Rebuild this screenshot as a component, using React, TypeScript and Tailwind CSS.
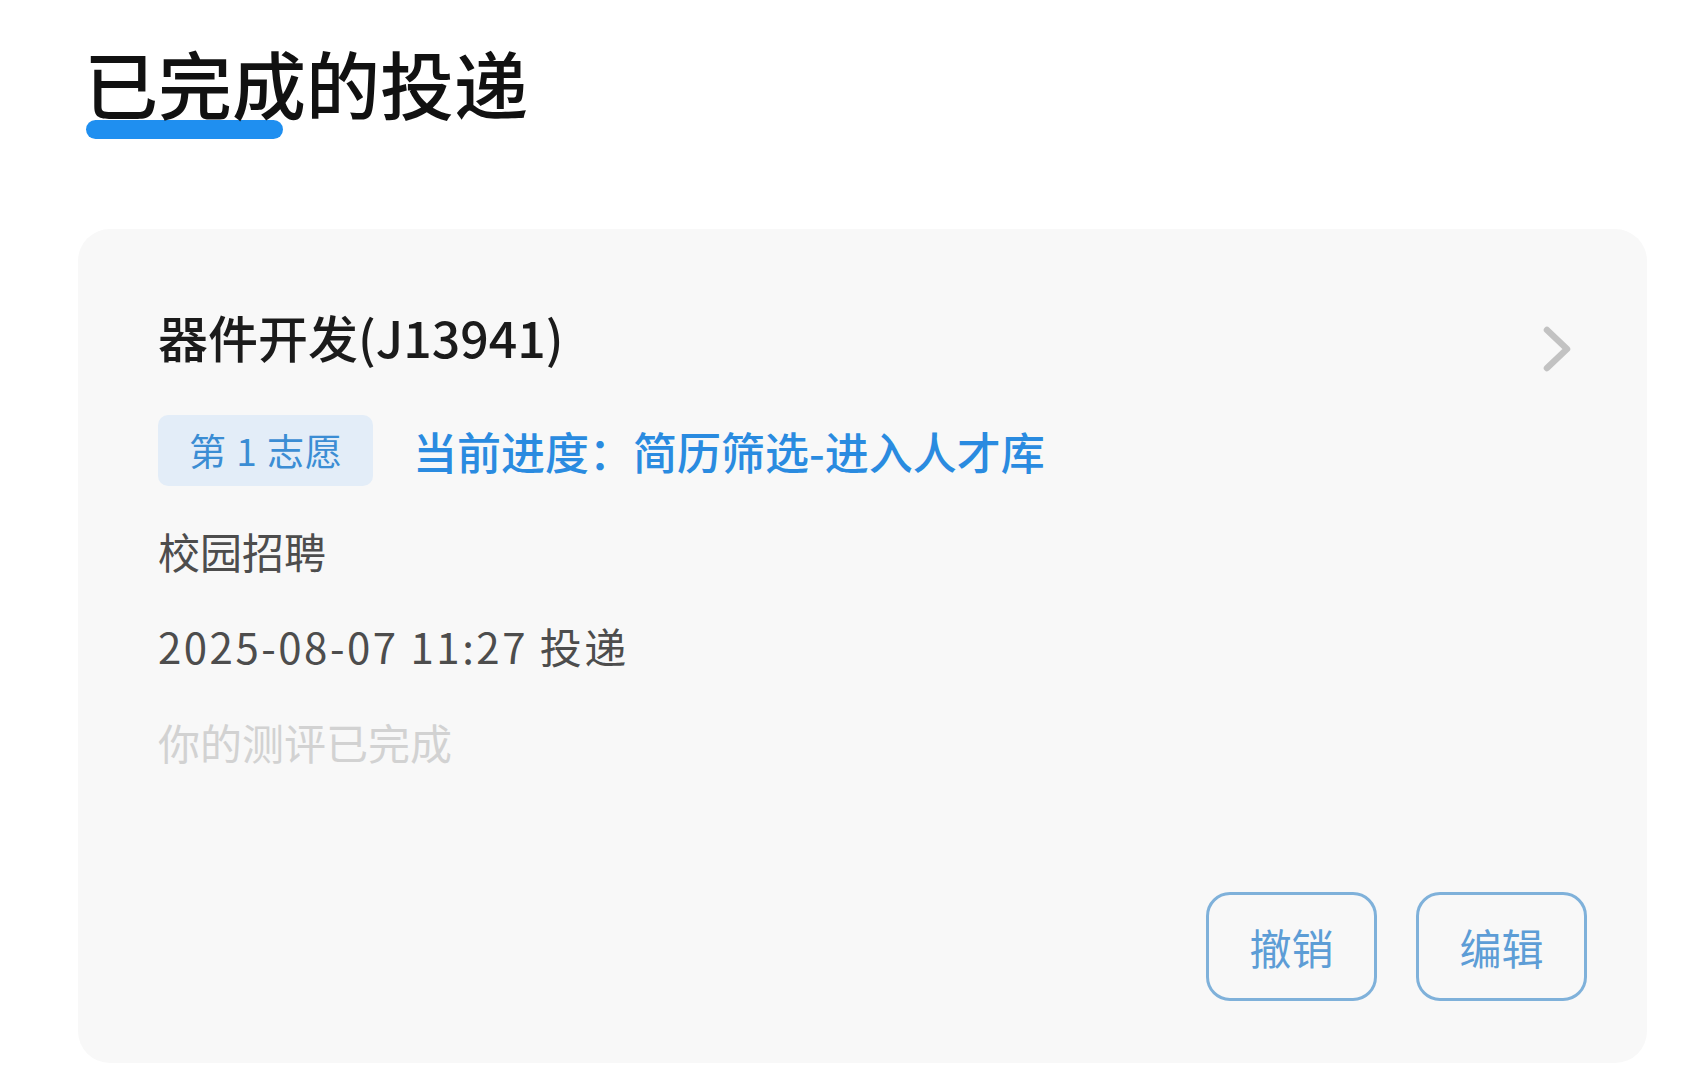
const font = { fontFamily: '"Noto Sans CJK SC", "Noto Sans", sans-serif' };

const Chevron = () => (
  <svg width="34" height="52" viewBox="0 0 34 52" className="translate-y-[13px] -mr-[2px]">
    <polyline points="6,6 26,25 6,44" fill="none" stroke="#c2c2c2" strokeWidth="6.5" strokeLinecap="round" strokeLinejoin="round" />
  </svg>
);

const ApplicationCard = () => {
  return (
    <div className="ml-[78px] mr-[46px] mt-[102px] rounded-[32px] bg-[#f8f8f8] pl-[80px] pr-[60px] pt-[75px] pb-[62px]">
      <div className="flex h-[65px] items-center justify-between pr-[14px]">
        <h2 className="text-[50px] leading-[65px] font-medium text-[#1b1b1b]">器件开发(J13941)</h2>
        <Chevron />
      </div>

      <div className="mt-[46px] flex items-center">
        <span className="flex h-[71px] w-[215px] items-center rounded-[10px] bg-[#e3edf8] pl-[31px] text-[37px] tracking-[1px] text-[#3b8dd4]">
          第 1 志愿
        </span>
        <span className="ml-[40px] text-[44px] font-medium text-[#2a8be0]">当前进度：简历筛选-进入人才库</span>
      </div>

      <div className="mt-[17px] text-[42px] leading-[95px] text-[#4d4d4d]">校园招聘</div>
      <div className="text-[42px] leading-[96px] tracking-[2.5px] text-[#4d4d4d]">2025-08-07 11:27 投递</div>
      <div className="text-[42px] leading-[96px] text-[#d2d2d2]">你的测评已完成</div>

      <div className="mt-[102px] flex justify-end gap-[39px]">
        <button className="h-[109px] w-[171px] rounded-[24px] border-[3px] border-[#7fb1da] text-[42px] text-[#5d9dd6]">
          撤销
        </button>
        <button className="h-[109px] w-[171px] rounded-[24px] border-[3px] border-[#7fb1da] text-[42px] text-[#5d9dd6]">
          编辑
        </button>
      </div>
    </div>
  );
};

const App = () => {
  return (
    <div className="min-h-screen bg-white" style={font}>
      <div className="pl-[84px] pt-[37px]">
        <h1 className="relative inline-block text-[74px] leading-[90px] font-medium text-[#111111]">
          <span className="absolute left-[2px] top-[83px] h-[19px] w-[197px] rounded-full bg-[#1f8ff0]" />
          <span className="relative">已完成的投递</span>
        </h1>
      </div>
      <ApplicationCard />
    </div>
  );
};

export default App;
